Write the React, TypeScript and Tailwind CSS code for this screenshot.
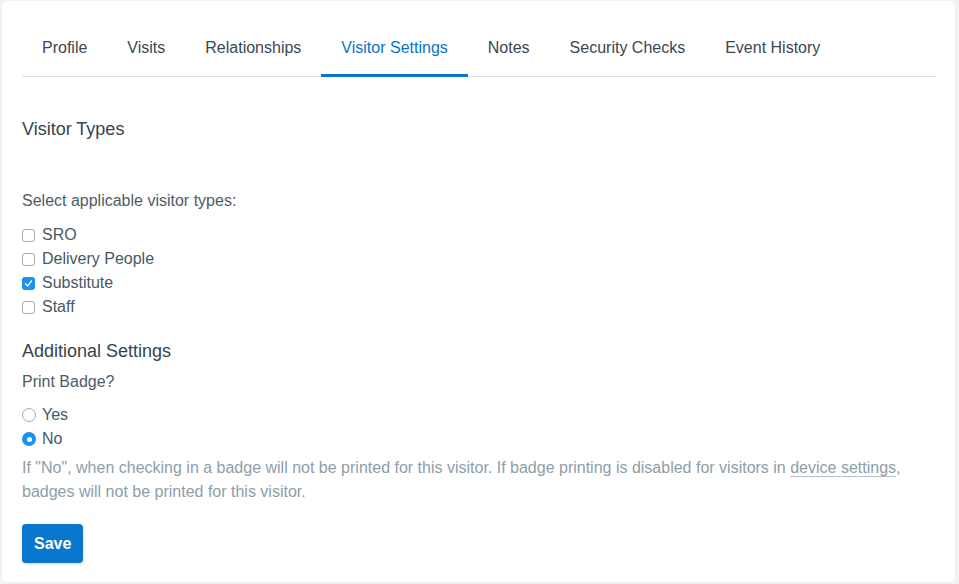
import React from "react";

const tabs = ["Profile", "Visits", "Relationships", "Visitor Settings", "Notes", "Security Checks", "Event History"];

function Checkbox({ checked }: { checked?: boolean }) {
  return checked ? (
    <span className="flex h-[13px] w-[13px] items-center justify-center rounded-[3px] bg-[#1f8ff0]">
      <svg width="9" height="9" viewBox="0 0 9 9" fill="none">
        <path d="M1.5 4.8 L3.6 7 L7.6 1.8" stroke="white" strokeWidth="1.3" strokeLinecap="round" strokeLinejoin="round" />
      </svg>
    </span>
  ) : (
    <span className="h-[13px] w-[13px] rounded-[3px] border border-[#a9a9a9] bg-white" />
  );
}

function Radio({ checked }: { checked?: boolean }) {
  return checked ? (
    <span className="flex h-[14px] w-[14px] items-center justify-center rounded-full bg-[#1f8ff0]">
      <span className="h-[5px] w-[5px] rounded-full bg-white" />
    </span>
  ) : (
    <span className="h-[14px] w-[14px] rounded-full border border-[#a9a9a9] bg-white" />
  );
}

export default function App() {
  return (
    <div className="h-[584px] w-[959px] bg-[#f1f2f3] pt-px pl-[2px]" style={{ fontFamily: '"Liberation Sans", Arial, sans-serif' }}>
      <div className="h-[581px] w-[953px] rounded-[5px] bg-white pl-5 pr-[18px] pt-[21px] text-[16px] text-[#3d4b55]">
        <div className="flex border-b border-[#e0e3e6]">
          {tabs.map((t) => (
            <div
              key={t}
              className={
                "-mb-px border-b-[3px] px-5 pt-[14px] pb-[14px] leading-6 " +
                (t === "Visitor Settings" ? "border-[#0a74cf] text-[#0a72c9]" : "border-transparent text-[#3a4851]")
              }
            >
              {t}
            </div>
          ))}
        </div>

        <div className="mt-10 text-[18px] leading-6 text-[#36444d]">Visitor Types</div>
        <div className="mt-12 leading-6 text-[#4e5c66]">Select applicable visitor types:</div>
        <div className="mt-[10px] flex flex-col">
          {[
            ["SRO", false],
            ["Delivery People", false],
            ["Substitute", true],
            ["Staff", false],
          ].map(([label, c]) => (
            <div key={label as string} className="flex h-6 items-center gap-[7px] text-[#4a5862]">
              <Checkbox checked={c as boolean} />
              <span>{label as string}</span>
            </div>
          ))}
        </div>

        <div className="mt-5 text-[18px] leading-6 text-[#36444d]">Additional Settings</div>
        <div className="mt-[7px] leading-6 text-[#4e5c66]">Print Badge?</div>
        <div className="mt-[9px] flex flex-col">
          <div className="flex h-6 items-center gap-[6px] text-[#4a5862]">
            <Radio />
            <span>Yes</span>
          </div>
          <div className="flex h-6 items-center gap-[6px] text-[#4a5862]">
            <Radio checked />
            <span>No</span>
          </div>
        </div>
        <p className="mt-[5px] leading-6 text-[#8e9ea8]">
          If "No", when checking in a badge will not be printed for this visitor. If badge printing is disabled for visitors in{" "}
          <span className="border-b border-[#b8bec3]">device settings</span>, badges will not be printed for this visitor.
        </p>
        <button className="mt-5 h-[39px] rounded-[4px] bg-[#0a77cf] px-3 font-bold text-white shadow-[0_1px_3px_rgba(0,0,0,0.18)]">
          Save
        </button>
      </div>
    </div>
  );
}
